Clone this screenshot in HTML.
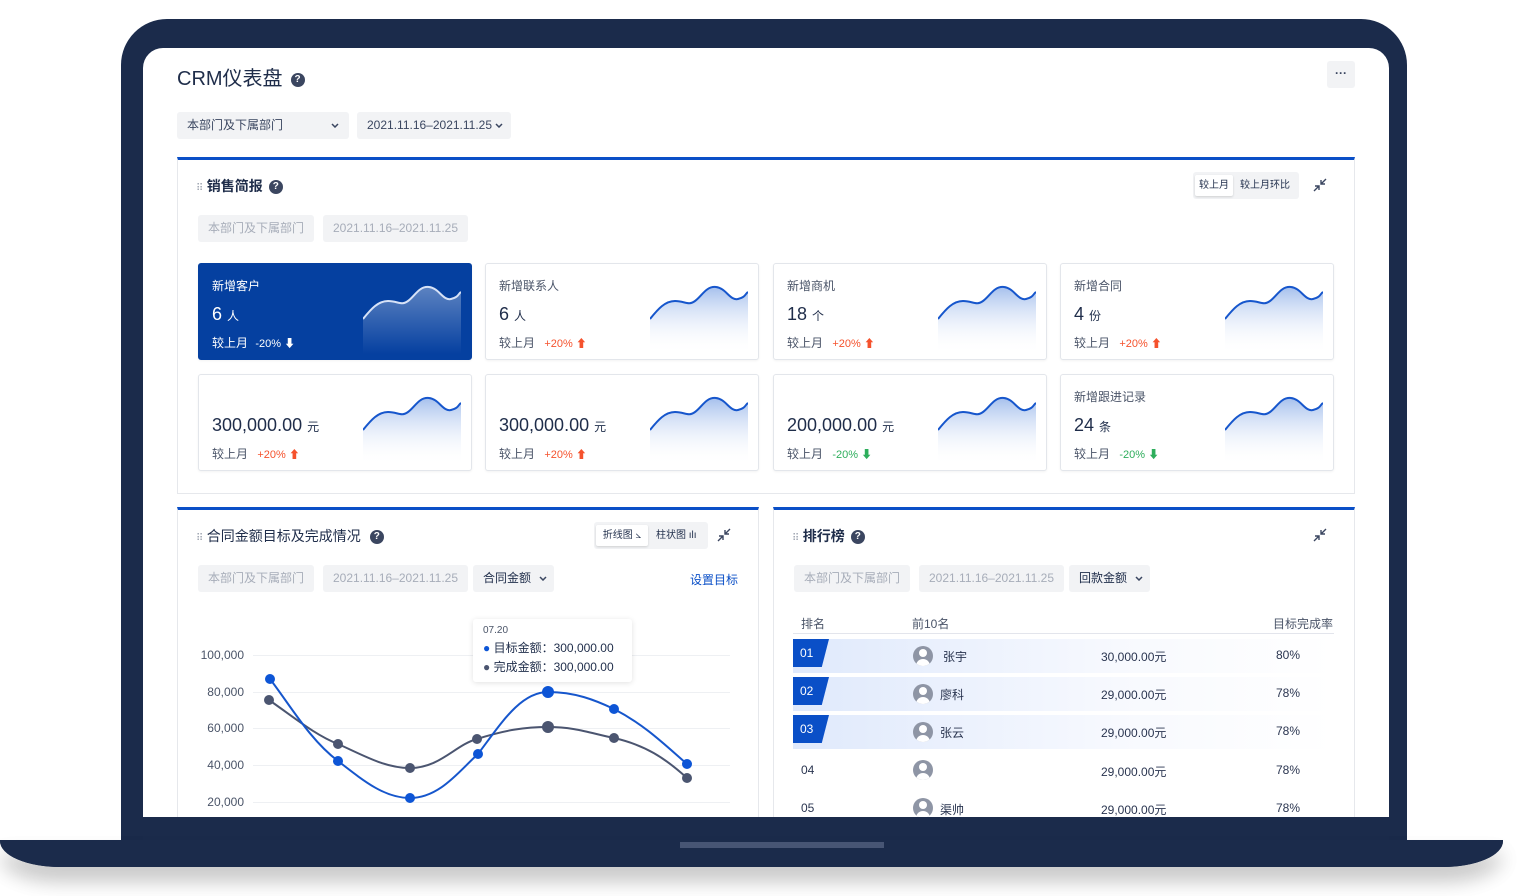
<!DOCTYPE html>
<html><head><meta charset="utf-8"><style>
*{margin:0;padding:0;box-sizing:border-box}
body{width:1524px;height:896px;background:#fff;position:relative;overflow:hidden;font-family:"Liberation Sans","Noto Sans CJK SC",sans-serif;color:#1f2d4a}
.a{position:absolute}
.lid{left:121px;top:19px;width:1286px;height:840px;background:#1b2b4b;border-radius:46px 46px 0 0}
.base{left:0;top:840px;width:1503px;height:27px;background:#1b2b4b;border-radius:0 0 60px 60px/0 0 26px 26px;box-shadow:0 14px 20px rgba(0,0,0,.12)}
.notch{left:680px;top:842px;width:204px;height:6px;background:#475574}
.screen{left:143px;top:48px;width:1246px;height:769px;background:#fff;border-radius:20px 20px 0 0;overflow:hidden}
.sel{background:#f2f3f5;border-radius:3px;font-size:12px;color:#3a4660;height:27px;line-height:27px;padding-left:10px}
.dis{background:#f2f3f5;border-radius:3px;font-size:12px;color:#a7adb9;height:27px;line-height:27px;padding:0 10px}
.sec{border:1px solid #e6e8ec;border-top:3px solid #0a4fc7;background:#fff}
.st{font-size:14px;font-weight:bold;color:#1f2d4a}
.q{display:inline-block;width:14px;height:14px;border-radius:50%;background:#3b4660;color:#fff;font-size:10px;text-align:center;line-height:14px;font-weight:bold;vertical-align:middle;margin-left:6px}
.dots{font-size:10px;color:#a0a6b2;letter-spacing:-1px}
.card{width:274px;height:97px;border:1px solid #e3e6eb;border-radius:3px;background:#fff;box-shadow:0 1px 2px rgba(0,0,0,.05)}
.card .t{position:absolute;left:13px;top:13px;font-size:12px;color:#4a5468}
.card .v{position:absolute;left:13px;top:40px;font-size:18px;color:#1f2d4a}
.card .v small{font-size:12px}
.card .c{position:absolute;left:13px;top:70px;font-size:12px;color:#4a5468}
.up{color:#f5522d;font-size:11px;margin-left:6px}
.dn{color:#2eae5c;font-size:11px;margin-left:6px}
.card svg{position:absolute;left:164px;top:20px}
.blue{background:#0540a0;border-color:#0540a0}
.blue .t,.blue .v,.blue .c{color:#fff}
.ax{font-size:12px;color:#4a5468;text-align:right;width:60px}
.g{height:1px;background:#eef0f3;left:253px;width:477px}
.rk{font-size:12px;color:#2a3550}
.badge{width:36px;height:28px;background:#0a4fc7;clip-path:polygon(0 0,100% 0,80% 100%,0 100%);color:#fff;font-size:12px;line-height:28px;padding-left:7px}
.rowbg{left:793px;width:540px;height:34px;background:linear-gradient(90deg,#dfe9fc,#f7f9fe 60%,#fff)}
.av{width:20px;height:20px;border-radius:50%;background:#8e95a5;overflow:hidden}
.av:before{content:"";position:absolute;left:6px;top:3px;width:8px;height:8px;border-radius:50%;background:#fff}
.av:after{content:"";position:absolute;left:3px;top:13px;width:14px;height:10px;border-radius:7px 7px 0 0;background:#fff}
.chev{display:inline-block;vertical-align:middle}
</style></head><body>
<div class="a lid"></div>
<div class="a base"></div>
<div class="a notch"></div>
<div class="a screen"></div>

<div class="a" style="left:177px;top:66px;font-size:20px;color:#1f2d4a;line-height:26px">CRM仪表盘<span class="q" style="margin-left:8px">?</span></div>
<div class="a" style="left:1327px;top:61px;width:28px;height:27px;background:#f2f3f5;border-radius:3px;text-align:center;font-size:12px;line-height:24px;color:#3b4660;font-weight:bold">···</div>
<div class="a sel" style="left:177px;top:112px;width:172px">本部门及下属部门<svg class="chev" style="position:absolute;right:10px;top:11px" width="8" height="5"><path d="M1,1 L4,4 L7,1" stroke="#3a4660" stroke-width="1.5" fill="none"/></svg></div>
<div class="a sel" style="left:357px;top:112px;width:154px">2021.11.16–2021.11.25 <svg class="chev" width="8" height="5"><path d="M1,1 L4,4 L7,1" stroke="#3a4660" stroke-width="1.5" fill="none"/></svg></div>

<!-- section 1 -->
<div class="a sec" style="left:177px;top:157px;width:1178px;height:337px"></div>
<div class="a" style="left:196px;top:176px;line-height:20px"><span class="dots">⠿</span> <span class="st">销售简报</span><span class="q">?</span></div>
<div class="a" style="left:1193px;top:172px;width:106px;height:27px;background:#f2f3f5;border-radius:3px"></div>
<div class="a" style="left:1195px;top:175px;width:38px;height:21px;background:#fff;border-radius:2px;box-shadow:0 1px 2px rgba(0,0,0,.15);font-size:10px;line-height:21px;text-align:center">较上月</div>
<div class="a" style="left:1240px;top:175px;font-size:10px;line-height:21px">较上月环比</div>
<svg class="a" style="left:1313px;top:178px" width="14" height="14"><path d="M13,1 L8,6 M8,2 L8,6 L12,6 M1,13 L6,8 M2,8 L6,8 L6,12" stroke="#3b4660" stroke-width="1.4" fill="none"/></svg>
<div class="a dis" style="left:198px;top:215px">本部门及下属部门</div>
<div class="a dis" style="left:323px;top:215px">2021.11.16–2021.11.25</div>

<svg width="0" height="0" style="position:absolute"><defs>
<linearGradient id="gf" x1="0" y1="0" x2="0" y2="1"><stop offset="0" stop-color="#8fb0e8" stop-opacity=".8"/><stop offset="1" stop-color="#fff" stop-opacity="0"/></linearGradient>
<linearGradient id="gw" x1="0" y1="0" x2="0" y2="1"><stop offset="0" stop-color="#fff" stop-opacity=".35"/><stop offset="1" stop-color="#fff" stop-opacity="0"/></linearGradient>
</defs></svg>

<div class="a card blue" style="left:198px;top:263px"><div class="t">新增客户</div><div class="v">6 <small>人</small></div><div class="c">较上月 <span style="font-size:11px;margin-left:4px">-20% ⬇</span></div>
<svg width="98" height="70" viewBox="0 0 98 70"><path d="M0,35 C8,25 15,17 25,17 S38,22 45,17 S56,2 66,3 S80,17 88,15 S95,10 98,8 L98,70 L0,70Z" fill="url(#gw)"/><path d="M0,35 C8,25 15,17 25,17 S38,22 45,17 S56,2 66,3 S80,17 88,15 S95,10 98,8" fill="none" stroke="#d7e2f7" stroke-width="2"/></svg></div>

<div class="a card" style="left:485px;top:263px"><div class="t">新增联系人</div><div class="v">6 <small>人</small></div><div class="c">较上月 <span class="up">+20% ⬆</span></div>
<svg width="98" height="70" viewBox="0 0 98 70"><path d="M0,35 C8,25 15,17 25,17 S38,22 45,17 S56,2 66,3 S80,17 88,15 S95,10 98,8 L98,70 L0,70Z" fill="url(#gf)"/><path d="M0,35 C8,25 15,17 25,17 S38,22 45,17 S56,2 66,3 S80,17 88,15 S95,10 98,8" fill="none" stroke="#1656cc" stroke-width="2"/></svg></div>

<div class="a card" style="left:773px;top:263px"><div class="t">新增商机</div><div class="v">18 <small>个</small></div><div class="c">较上月 <span class="up">+20% ⬆</span></div>
<svg width="98" height="70" viewBox="0 0 98 70"><path d="M0,35 C8,25 15,17 25,17 S38,22 45,17 S56,2 66,3 S80,17 88,15 S95,10 98,8 L98,70 L0,70Z" fill="url(#gf)"/><path d="M0,35 C8,25 15,17 25,17 S38,22 45,17 S56,2 66,3 S80,17 88,15 S95,10 98,8" fill="none" stroke="#1656cc" stroke-width="2"/></svg></div>

<div class="a card" style="left:1060px;top:263px"><div class="t">新增合同</div><div class="v">4 <small>份</small></div><div class="c">较上月 <span class="up">+20% ⬆</span></div>
<svg width="98" height="70" viewBox="0 0 98 70"><path d="M0,35 C8,25 15,17 25,17 S38,22 45,17 S56,2 66,3 S80,17 88,15 S95,10 98,8 L98,70 L0,70Z" fill="url(#gf)"/><path d="M0,35 C8,25 15,17 25,17 S38,22 45,17 S56,2 66,3 S80,17 88,15 S95,10 98,8" fill="none" stroke="#1656cc" stroke-width="2"/></svg></div>

<div class="a card" style="left:198px;top:374px"><div class="v">300,000.00 <small>元</small></div><div class="c">较上月 <span class="up">+20% ⬆</span></div>
<svg width="98" height="70" viewBox="0 0 98 70"><path d="M0,35 C8,25 15,17 25,17 S38,22 45,17 S56,2 66,3 S80,17 88,15 S95,10 98,8 L98,70 L0,70Z" fill="url(#gf)"/><path d="M0,35 C8,25 15,17 25,17 S38,22 45,17 S56,2 66,3 S80,17 88,15 S95,10 98,8" fill="none" stroke="#1656cc" stroke-width="2"/></svg></div>

<div class="a card" style="left:485px;top:374px"><div class="v">300,000.00 <small>元</small></div><div class="c">较上月 <span class="up">+20% ⬆</span></div>
<svg width="98" height="70" viewBox="0 0 98 70"><path d="M0,35 C8,25 15,17 25,17 S38,22 45,17 S56,2 66,3 S80,17 88,15 S95,10 98,8 L98,70 L0,70Z" fill="url(#gf)"/><path d="M0,35 C8,25 15,17 25,17 S38,22 45,17 S56,2 66,3 S80,17 88,15 S95,10 98,8" fill="none" stroke="#1656cc" stroke-width="2"/></svg></div>

<div class="a card" style="left:773px;top:374px"><div class="v">200,000.00 <small>元</small></div><div class="c">较上月 <span class="dn">-20% ⬇</span></div>
<svg width="98" height="70" viewBox="0 0 98 70"><path d="M0,35 C8,25 15,17 25,17 S38,22 45,17 S56,2 66,3 S80,17 88,15 S95,10 98,8 L98,70 L0,70Z" fill="url(#gf)"/><path d="M0,35 C8,25 15,17 25,17 S38,22 45,17 S56,2 66,3 S80,17 88,15 S95,10 98,8" fill="none" stroke="#1656cc" stroke-width="2"/></svg></div>

<div class="a card" style="left:1060px;top:374px"><div class="t">新增跟进记录</div><div class="v">24 <small>条</small></div><div class="c">较上月 <span class="dn">-20% ⬇</span></div>
<svg width="98" height="70" viewBox="0 0 98 70"><path d="M0,35 C8,25 15,17 25,17 S38,22 45,17 S56,2 66,3 S80,17 88,15 S95,10 98,8 L98,70 L0,70Z" fill="url(#gf)"/><path d="M0,35 C8,25 15,17 25,17 S38,22 45,17 S56,2 66,3 S80,17 88,15 S95,10 98,8" fill="none" stroke="#1656cc" stroke-width="2"/></svg></div>

<!-- section 2 left -->
<div class="a sec" style="left:177px;top:507px;width:582px;height:330px"></div>
<div class="a" style="left:196px;top:526px;line-height:20px"><span class="dots">⠿</span> <span class="st" style="font-weight:normal;font-size:14px">合同金额目标及完成情况</span><span class="q" style="margin-left:9px">?</span></div>
<div class="a" style="left:594px;top:522px;width:114px;height:27px;background:#f2f3f5;border-radius:3px"></div>
<div class="a" style="left:596px;top:525px;width:52px;height:21px;background:#fff;border-radius:2px;box-shadow:0 1px 2px rgba(0,0,0,.15);font-size:10px;line-height:21px;text-align:center">折线图 ⦣</div>
<div class="a" style="left:656px;top:525px;font-size:10px;line-height:21px">柱状图 ılı</div>
<svg class="a" style="left:717px;top:528px" width="14" height="14"><path d="M13,1 L8,6 M8,2 L8,6 L12,6 M1,13 L6,8 M2,8 L6,8 L6,12" stroke="#3b4660" stroke-width="1.4" fill="none"/></svg>
<div class="a dis" style="left:198px;top:565px">本部门及下属部门</div>
<div class="a dis" style="left:323px;top:565px">2021.11.16–2021.11.25</div>
<div class="a sel" style="left:473px;top:565px;width:81px;color:#1f2d4a">合同金额 <svg class="chev" style="margin-left:5px" width="8" height="5"><path d="M1,1 L4,4 L7,1" stroke="#3a4660" stroke-width="1.5" fill="none"/></svg></div>
<div class="a" style="left:690px;top:571px;font-size:12px;color:#0a4fc7">设置目标</div>

<div class="a ax" style="left:184px;top:648px">100,000</div>
<div class="a ax" style="left:184px;top:685px">80,000</div>
<div class="a ax" style="left:184px;top:721px">60,000</div>
<div class="a ax" style="left:184px;top:758px">40,000</div>
<div class="a ax" style="left:184px;top:795px">20,000</div>
<div class="a g" style="top:655px"></div><div class="a g" style="top:692px"></div><div class="a g" style="top:728px"></div><div class="a g" style="top:765px"></div><div class="a g" style="top:802px"></div>
<svg class="a" style="left:0;top:0" width="760" height="817">
<path d="M269,700 C295,718 315,735 338,744 C365,756 385,768 410,768 C440,768 455,745 477,739 C505,730 525,727 548,727 C575,727 590,733 614,738 C645,745 665,758 687,778" fill="none" stroke="#4b5570" stroke-width="2"/>
<path d="M270,679 C290,705 310,740 338,761 C365,782 385,798 410,798 C440,798 460,770 478,754 C500,725 520,692 548,692 C575,692 595,700 614,709 C645,725 665,745 687,764" fill="none" stroke="#1656cc" stroke-width="2"/>
<g fill="#4b5570"><circle cx="269" cy="700" r="5"/><circle cx="338" cy="744" r="5"/><circle cx="410" cy="768" r="5"/><circle cx="477" cy="739" r="5"/><circle cx="548" cy="727" r="6"/><circle cx="614" cy="738" r="5"/><circle cx="687" cy="778" r="5"/></g>
<g fill="#0d55d6"><circle cx="270" cy="679" r="5"/><circle cx="338" cy="761" r="5"/><circle cx="410" cy="798" r="5"/><circle cx="478" cy="754" r="5"/><circle cx="548" cy="692" r="6"/><circle cx="614" cy="709" r="5"/><circle cx="687" cy="764" r="5"/></g>
</svg>
<div class="a" style="left:473px;top:619px;width:159px;height:63px;background:#fff;border-radius:3px;box-shadow:0 1px 6px rgba(0,0,0,.12);font-size:12px;color:#1f2d4a;padding:6px 10px">
<div style="font-size:10px;color:#4a5468">07.20</div>
<div style="margin-top:3px"><span style="color:#0d55d6">●</span> 目标金额：300,000.00</div>
<div style="margin-top:2px"><span style="color:#4b5570">●</span> 完成金额：300,000.00</div></div>

<!-- section 2 right -->
<div class="a sec" style="left:773px;top:507px;width:582px;height:330px"></div>
<div class="a" style="left:792px;top:526px;line-height:20px"><span class="dots">⠿</span> <span class="st">排行榜</span><span class="q">?</span></div>
<svg class="a" style="left:1313px;top:528px" width="14" height="14"><path d="M13,1 L8,6 M8,2 L8,6 L12,6 M1,13 L6,8 M2,8 L6,8 L6,12" stroke="#3b4660" stroke-width="1.4" fill="none"/></svg>
<div class="a dis" style="left:794px;top:565px">本部门及下属部门</div>
<div class="a dis" style="left:919px;top:565px">2021.11.16–2021.11.25</div>
<div class="a sel" style="left:1069px;top:565px;width:81px;color:#1f2d4a">回款金额 <svg class="chev" style="margin-left:5px" width="8" height="5"><path d="M1,1 L4,4 L7,1" stroke="#3a4660" stroke-width="1.5" fill="none"/></svg></div>
<div class="a" style="left:801px;top:615px;font-size:12px;color:#4a5468">排名</div>
<div class="a" style="left:912px;top:615px;font-size:12px;color:#4a5468">前10名</div>
<div class="a" style="left:1273px;top:615px;font-size:12px;color:#4a5468">目标完成率</div>
<div class="a" style="left:793px;top:633px;width:541px;height:1px;background:#e3e5ec"></div>

<div class="a rowbg" style="top:639px"></div><div class="a rowbg" style="top:677px"></div><div class="a rowbg" style="top:715px"></div>
<div class="a badge" style="left:793px;top:639px">01</div>
<div class="a badge" style="left:793px;top:677px">02</div>
<div class="a badge" style="left:793px;top:715px">03</div>
<div class="a rk" style="left:801px;top:763px">04</div>
<div class="a rk" style="left:801px;top:801px">05</div>
<div class="a av" style="left:913px;top:646px"></div><div class="a rk" style="left:943px;top:648px">张宇</div>
<div class="a av" style="left:913px;top:684px"></div><div class="a rk" style="left:940px;top:686px">廖科</div>
<div class="a av" style="left:913px;top:722px"></div><div class="a rk" style="left:940px;top:724px">张云</div>
<div class="a av" style="left:913px;top:760px"></div>
<div class="a av" style="left:913px;top:798px"></div><div class="a rk" style="left:940px;top:801px">渠帅</div>
<div class="a rk" style="left:1101px;top:648px">30,000.00元</div>
<div class="a rk" style="left:1101px;top:686px">29,000.00元</div>
<div class="a rk" style="left:1101px;top:724px">29,000.00元</div>
<div class="a rk" style="left:1101px;top:763px">29,000.00元</div>
<div class="a rk" style="left:1101px;top:801px">29,000.00元</div>
<div class="a rk" style="left:1276px;top:648px">80%</div>
<div class="a rk" style="left:1276px;top:686px">78%</div>
<div class="a rk" style="left:1276px;top:724px">78%</div>
<div class="a rk" style="left:1276px;top:763px">78%</div>
<div class="a rk" style="left:1276px;top:801px">78%</div>

<!-- cover below screen -->
<div class="a" style="left:143px;top:817px;width:1246px;height:24px;background:#1b2b4b"></div>
<div class="a base"></div>
<div class="a notch"></div>
</body></html>
